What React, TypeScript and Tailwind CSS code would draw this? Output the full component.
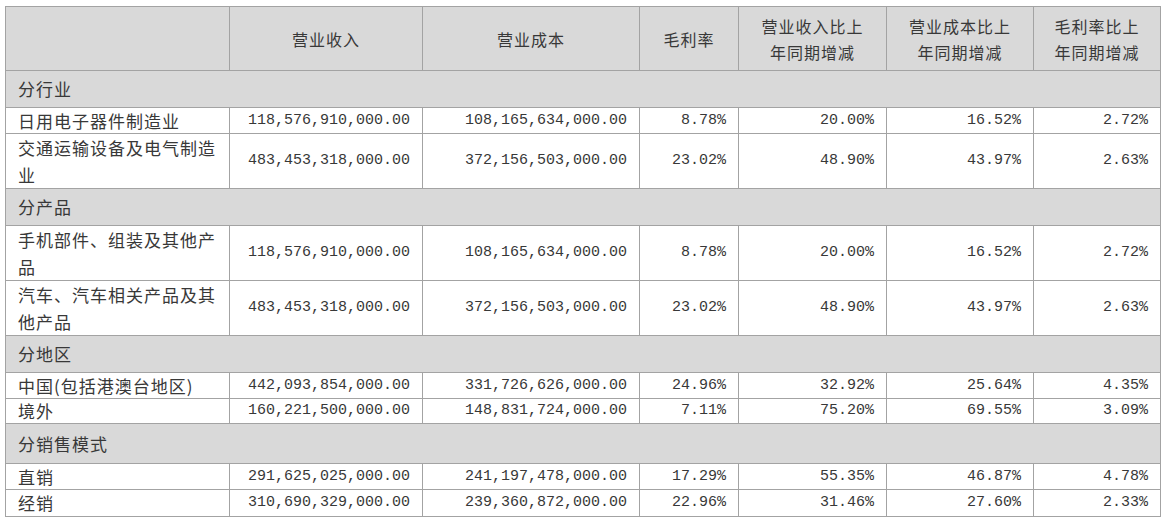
import React from "react";

type Row =
  | { kind: "section"; label: string; h: string }
  | { kind: "data"; label: string[]; v: string[]; h: string };

const rows: Row[] = [
  { kind: "section", label: "分行业", h: "h-[37px]" },
  {
    kind: "data",
    label: ["日用电子器件制造业"],
    v: ["118,576,910,000.00", "108,165,634,000.00", "8.78%", "20.00%", "16.52%", "2.72%"],
    h: "h-[26px]",
  },
  {
    kind: "data",
    label: ["交通运输设备及电气制造", "业"],
    v: ["483,453,318,000.00", "372,156,503,000.00", "23.02%", "48.90%", "43.97%", "2.63%"],
    h: "h-[54px]",
  },
  { kind: "section", label: "分产品", h: "h-[37px]" },
  {
    kind: "data",
    label: ["手机部件、组装及其他产", "品"],
    v: ["118,576,910,000.00", "108,165,634,000.00", "8.78%", "20.00%", "16.52%", "2.72%"],
    h: "h-[55px]",
  },
  {
    kind: "data",
    label: ["汽车、汽车相关产品及其", "他产品"],
    v: ["483,453,318,000.00", "372,156,503,000.00", "23.02%", "48.90%", "43.97%", "2.63%"],
    h: "h-[53px]",
  },
  { kind: "section", label: "分地区", h: "h-[37px]" },
  {
    kind: "data",
    label: ["中国(包括港澳台地区)"],
    v: ["442,093,854,000.00", "331,726,626,000.00", "24.96%", "32.92%", "25.64%", "4.35%"],
    h: "h-[26px]",
  },
  {
    kind: "data",
    label: ["境外"],
    v: ["160,221,500,000.00", "148,831,724,000.00", "7.11%", "75.20%", "69.55%", "3.09%"],
    h: "h-[25px]",
  },
  { kind: "section", label: "分销售模式", h: "h-[40px]" },
  {
    kind: "data",
    label: ["直销"],
    v: ["291,625,025,000.00", "241,197,478,000.00", "17.29%", "55.35%", "46.87%", "4.78%"],
    h: "h-[26px]",
  },
  {
    kind: "data",
    label: ["经销"],
    v: ["310,690,329,000.00", "239,360,872,000.00", "22.96%", "31.46%", "27.60%", "2.33%"],
    h: "h-[27px]",
  },
];

const cjk = "font-['Noto_Sans_CJK_SC','Noto_Sans',sans-serif]";
const mono = "font-['Liberation_Mono','DejaVu_Sans_Mono',monospace]";
const bd = "border border-[#a3a3a3]";

export default function App() {
  return (
    <div className="w-[1169px] h-[526px] bg-white pt-[6px] pl-[5px] text-[#383838]">
      <table className="table-fixed border-collapse w-[1155px]">
        <colgroup>
          <col className="w-[224px]" />
          <col className="w-[193px]" />
          <col className="w-[217px]" />
          <col className="w-[99px]" />
          <col className="w-[148px]" />
          <col className="w-[147px]" />
          <col className="w-[127px]" />
        </colgroup>
        <thead>
          <tr className="h-[64px] bg-[#d9d9d9]">
            <th className={`${bd}`}></th>
            <th className={`${bd} ${cjk} font-normal text-[16px] tracking-[1px] text-center align-middle`}>营业收入</th>
            <th className={`${bd} ${cjk} font-normal text-[16px] tracking-[1px] text-center align-middle`}>营业成本</th>
            <th className={`${bd} ${cjk} font-normal text-[16px] tracking-[1px] text-center align-middle`}>毛利率</th>
            <th className={`${bd} ${cjk} font-normal text-[16px] leading-[26px] tracking-[1px] text-center align-middle`}>
              营业收入比上
              <br />
              年同期增减
            </th>
            <th className={`${bd} ${cjk} font-normal text-[16px] leading-[26px] tracking-[1px] text-center align-middle`}>
              营业成本比上
              <br />
              年同期增减
            </th>
            <th className={`${bd} ${cjk} font-normal text-[16px] leading-[26px] tracking-[1px] text-center align-middle`}>
              毛利率比上
              <br />
              年同期增减
            </th>
          </tr>
        </thead>
        <tbody>
          {rows.map((r, i) =>
            r.kind === "section" ? (
              <tr key={i} className={`${r.h} bg-[#d9d9d9]`}>
                <td colSpan={7} className={`${bd} ${cjk} text-[17px] leading-[22px] tracking-[1px] pl-[12px] align-middle`}>
                  {r.label}
                </td>
              </tr>
            ) : (
              <tr key={i} className={`${r.h} bg-white`}>
                <td
                  className={`${bd} ${cjk} text-[17px] tracking-[1px] ${
                    r.label.length > 1 ? "leading-[27px]" : "leading-[20px]"
                  } pl-[12px] p-0 align-middle`}
                >
                  {r.label.map((l, j) => (
                    <div key={j}>{l}</div>
                  ))}
                </td>
                {r.v.map((v, j) => (
                  <td key={j} className={`${bd} ${mono} text-[15px] leading-[20px] text-right pr-[12px] align-middle`}>
                    {v}
                  </td>
                ))}
              </tr>
            )
          )}
        </tbody>
      </table>
    </div>
  );
}
